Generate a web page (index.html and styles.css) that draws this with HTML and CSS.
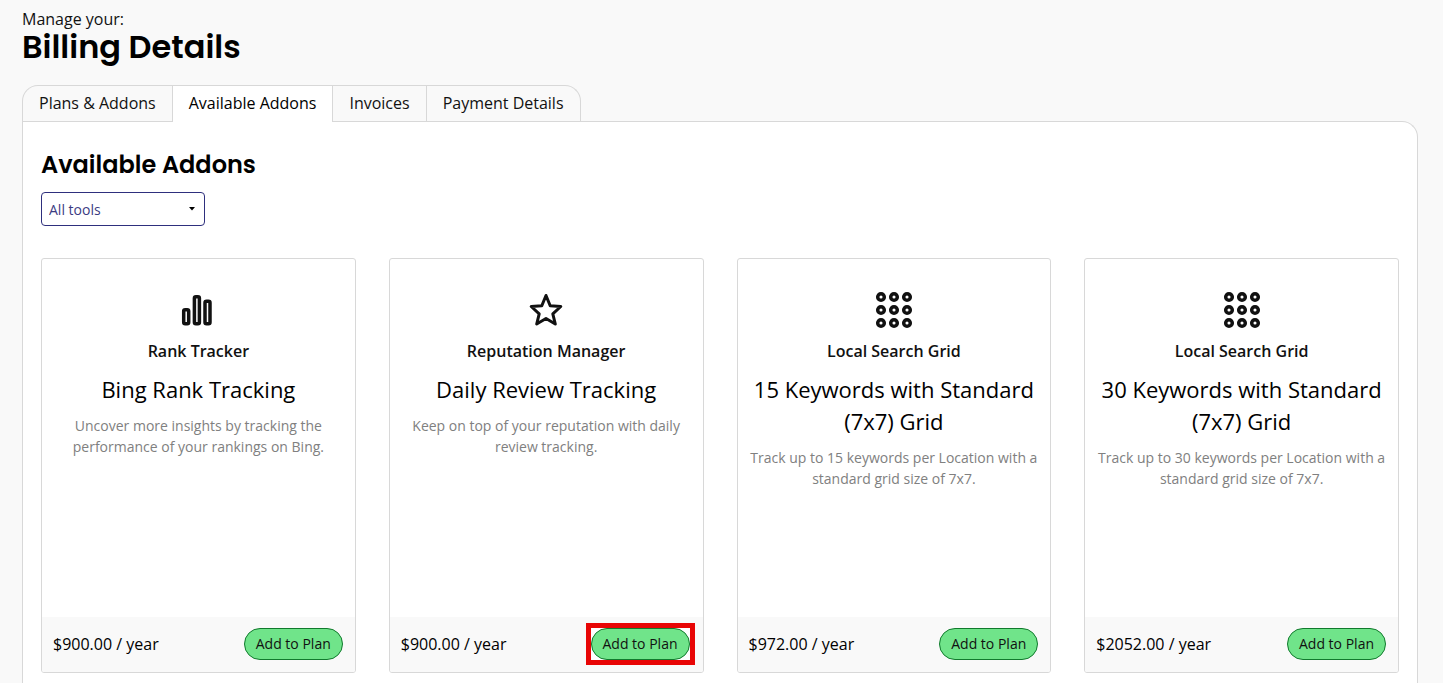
FILE: index.html
```html
<!DOCTYPE html>
<html lang="en">
<head>
    <meta charset="UTF-8">
    <meta name="viewport" content="width=device-width, initial-scale=1.0">
    <title>Billing Details</title>
    <link rel="stylesheet" href="styles.css">
</head>
<body>
    <!-- Shared icons -->
    <svg class="sprite" aria-hidden="true">
        <symbol id="icon-bars" viewBox="0 0 40 40">
            <g fill="none" stroke="currentColor" stroke-width="3.5">
                <rect x="5.700" y="19.700" width="5" height="14" rx="1.500"/>
                <rect x="16.400" y="6.700" width="5" height="27" rx="1.500"/>
                <rect x="27" y="11.200" width="5" height="22.500" rx="1.500"/>
            </g>
        </symbol>
        <symbol id="icon-star" viewBox="0 0 40 40">
            <path fill="none" stroke="currentColor" stroke-width="3" stroke-linejoin="round" d="M20 5.500L24.200 15.800L34.800 16.500L26.800 23.800L29.300 34L20 28.500L10.700 34L13.200 23.800L5.200 16.500L15.800 15.800Z"/>
        </symbol>
        <symbol id="icon-grid" viewBox="0 0 40 40">
            <g fill="none" stroke="currentColor" stroke-width="3.5">
                <circle cx="7" cy="7" r="3.300"/>
                <circle cx="20" cy="7" r="3.300"/>
                <circle cx="33" cy="7" r="3.300"/>
                <circle cx="7" cy="20" r="3.300"/>
                <circle cx="20" cy="20" r="3.300"/>
                <circle cx="33" cy="20" r="3.300"/>
                <circle cx="7" cy="33" r="3.300"/>
                <circle cx="20" cy="33" r="3.300"/>
                <circle cx="33" cy="33" r="3.300"/>
            </g>
        </symbol>
    </svg>

    <header>
        <p class="eyebrow">Manage your:</p>
        <h1>Billing Details</h1>
    </header>

    <nav class="tabs">
        <a href="#plans">Plans &amp; Addons</a>
        <a href="#addons" class="active" aria-current="page">Available Addons</a>
        <a href="#invoices">Invoices</a>
        <a href="#payment">Payment Details</a>
    </nav>

    <main class="panel" id="addons">
        <h2>Available Addons</h2>
        <div class="filter">
            <select aria-label="Filter by tool">
                <option>All tools</option>
                <option>Rank Tracker</option>
                <option>Reputation Manager</option>
                <option>Local Search Grid</option>
            </select>
            <svg class="caret" viewBox="0 0 6 4" aria-hidden="true"><path d="M0 0H6L3 3.500Z"/></svg>
        </div>

        <div class="cards">
            <article class="card">
                <div class="card-body">
                    <svg class="icon" aria-hidden="true"><use href="#icon-bars"/></svg>
                    <h3>Rank Tracker</h3>
                    <p class="addon">Bing Rank Tracking</p>
                    <p class="description">Uncover more insights by tracking the performance of your rankings on Bing.</p>
                </div>
                <div class="card-footer">
                    <span>$900.00 / year</span>
                    <button type="button">Add to Plan</button>
                </div>
            </article>
            <article class="card">
                <div class="card-body">
                    <svg class="icon" aria-hidden="true"><use href="#icon-star"/></svg>
                    <h3>Reputation Manager</h3>
                    <p class="addon">Daily Review Tracking</p>
                    <p class="description">Keep on top of your reputation with daily review tracking.</p>
                </div>
                <div class="card-footer">
                    <span>$900.00 / year</span>
                    <div class="highlight"><button type="button">Add to Plan</button></div>
                </div>
            </article>
            <article class="card">
                <div class="card-body">
                    <svg class="icon" aria-hidden="true"><use href="#icon-grid"/></svg>
                    <h3>Local Search Grid</h3>
                    <p class="addon">15 Keywords with Standard (7x7) Grid</p>
                    <p class="description">Track up to 15 keywords per Location with a standard grid size of 7x7.</p>
                </div>
                <div class="card-footer">
                    <span>$972.00 / year</span>
                    <button type="button">Add to Plan</button>
                </div>
            </article>
            <article class="card">
                <div class="card-body">
                    <svg class="icon" aria-hidden="true"><use href="#icon-grid"/></svg>
                    <h3>Local Search Grid</h3>
                    <p class="addon">30 Keywords with Standard (7x7) Grid</p>
                    <p class="description">Track up to 30 keywords per Location with a standard grid size of 7x7.</p>
                </div>
                <div class="card-footer">
                    <span>$2052.00 / year</span>
                    <button type="button">Add to Plan</button>
                </div>
            </article>
        </div>
    </main>
</body>
</html>
```
FILE: styles.css
```css
* { box-sizing: border-box; }
body { margin: 0; padding: 8px 25px 0 22px; min-height: 100vh; display: flex; flex-direction: column; font-family: "Open Sans", "Noto Sans", sans-serif; font-size: 16px; line-height: 22px; color: #111; background-color: #f9f9f9; }
h1, h2, h3, p { margin: 0; }
h1, h2 { font-family: Poppins, Inter, sans-serif; font-weight: 600; color: #000; }
h1 { font-size: 32px; line-height: 34px; }
h2 { font-size: 24px; line-height: 32px; }
.sprite { display: none; }

/* Tabs */
.tabs { display: flex; margin-top: 21px; }
.tabs a { height: 36px; padding: 6px 16px; border: 1px solid #d8d8d8; border-width: 1px 1px 0 0; color: #111; text-decoration: none; }
.tabs a:first-child { border-left-width: 1px; border-top-left-radius: 16px; }
.tabs a:last-child { border-top-right-radius: 16px; }
/* The active tab covers the top line of the panel */
.tabs .active { height: 37px; margin-bottom: -1px; position: relative; background-color: #fff; color: #000; }

.panel { flex-grow: 1; padding: 27px 18px 10px; background-color: #fff; border: 1px solid #d8d8d8; border-bottom: none; border-top-right-radius: 16px; }

.filter { display: grid; width: 164px; margin: 11px 0 32px; align-items: center; }
.filter select, .caret { grid-area: 1 / 1; }
.filter select { appearance: none; height: 34px; padding: 1px 7px 0; border: 1px solid #2e2f7d; border-radius: 4px; background-color: #fff; color: #3b3b82; font: inherit; font-size: 14px; }
.caret { width: 6px; height: 4px; margin-right: 10px; justify-self: end; pointer-events: none; }

/* Addon cards */
.cards { display: grid; grid-template-columns: repeat(4, 1fr); gap: 33px; }
.card { display: flex; flex-direction: column; min-height: 415px; border: 1px solid #d8d8d8; border-radius: 3px; background-color: #fff; overflow: hidden; }
.card-body { flex-grow: 1; padding: 31px 11px 16px; text-align: center; }
.icon { display: block; width: 40px; height: 40px; margin: 0 auto 10px; color: #111; }
h3 { font-size: 16px; font-weight: 600; line-height: 22px; }
.addon { margin: 11px 0 10px; font-size: 22px; line-height: 32px; color: #000; }
.description { font-size: 14px; line-height: 21px; color: #808080; }
.card-footer { display: flex; align-items: center; justify-content: space-between; height: 55px; padding: 0 12px 2px 11px; background-color: #f9f9f9; color: #000; }
button { height: 32px; padding: 0 11px; border: 1px solid #117a2d; border-radius: 16px; background-color: #70e48a; color: #111; font: inherit; font-size: 14px; cursor: pointer; }
button:hover { background-color: #5bd577; }
.highlight { display: flex; margin-right: -4px; border: 5px solid #e80505; background-color: #fff; }
```
